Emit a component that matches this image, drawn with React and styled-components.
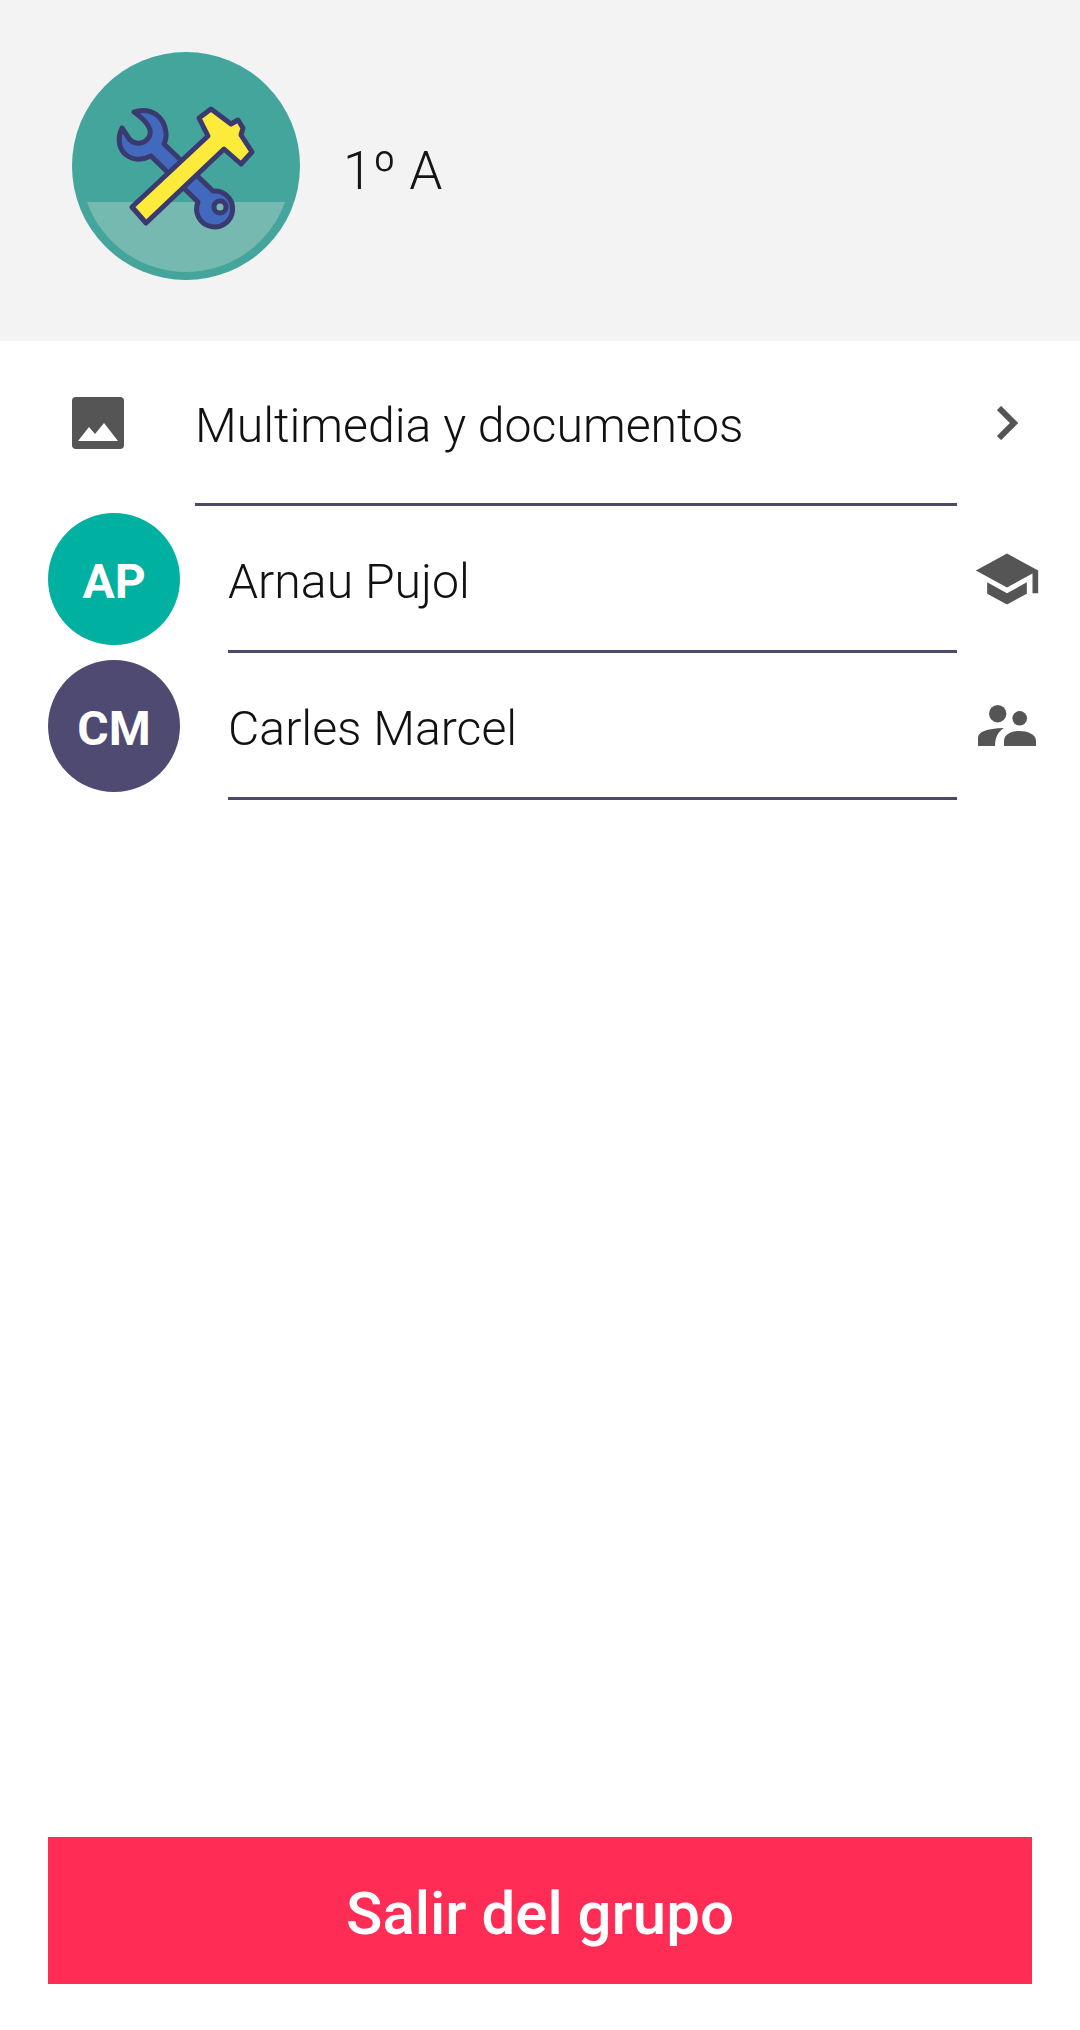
import React from "react";
import styled, { createGlobalStyle } from "styled-components";

const GlobalStyle = createGlobalStyle`
  html, body {
    margin: 0;
    padding: 0;
    background: #fff;
    font-family: Roboto, "Liberation Sans", sans-serif;
  }
`;

const Page = styled.div`
  width: 1080px;
  height: 2030px;
  display: flex;
  flex-direction: column;
  background: #fff;
`;

const Header = styled.header`
  height: 341px;
  box-sizing: border-box;
  padding: 0 0 9px 72px;
  display: flex;
  align-items: center;
  background: #f3f3f3;
`;

const GroupLogo = styled.svg`
  width: 228px;
  height: 228px;
  flex-shrink: 0;
`;

const GroupName = styled.h1`
  margin: 10px 0 0 43px;
  font-size: 53px;
  font-weight: 300;
  color: #151515;
`;

const Row = styled.div`
  display: flex;
  align-items: center;
  padding: 0 23px 0 ${props => props.$left}px;
`;

const MediaIcon = styled.svg`
  width: 52px;
  height: 52px;
  flex-shrink: 0;
  margin-right: 71px;
  margin-top: -1px;
`;

const Avatar = styled.div`
  width: 132px;
  height: 132px;
  box-sizing: border-box;
  padding-top: 4px;
  flex-shrink: 0;
  margin-right: 48px;
  margin-top: -1px;
  border-radius: 50%;
  background: ${props => props.$color};
  color: #fff;
  font-size: 48px;
  font-weight: 700;
  display: flex;
  align-items: center;
  justify-content: center;
`;

const RowBody = styled.div`
  flex: 1;
  height: ${props => props.$height}px;
  display: flex;
  align-items: center;
  box-sizing: border-box;
  padding-top: 6px;
  border-bottom: 3px solid #4b4a68;
  font-size: 48.2px;
  font-weight: 300;
  color: #111;
`;

const RowIcon = styled.div`
  width: 100px;
  flex-shrink: 0;
  margin-top: -1px;
  display: flex;
  justify-content: center;
  color: #555;
`;

const LeaveButton = styled.button`
  margin: auto 48px 46px;
  height: 147px;
  border: 0;
  padding: 6px 0 0;
  background: #ff2d55;
  color: #fff;
  font-family: inherit;
  font-size: 60px;
  font-weight: 500;
`;

const Logo = () => (
  <GroupLogo viewBox="0 0 228 228">
    <circle cx="114" cy="114" r="114" fill="#43a59b" />
    <path d="M15 150H213A105 105 0 0 1 15 150Z" fill="#75b9b1" />
    <g stroke="#3a3a70" strokeWidth="5" strokeLinejoin="round" fill="#4169be">
      <path d="M62 60C70 57 80 58 87 65C94 72 96 84 92 92L141 139A18 18 0 1 1 126 150L79 104C69 109 59 108 52 101C46 94 46 84 50 76L58 88C64 93 73 92 77 85C81 78 76 70 62 60Z" />
      <circle cx="148" cy="155" r="6" fill="#75b9b1" />
    </g>
    <path
      d="M139 57L159 72L166 68L171 76L169 83L180 100L169 112L152 97L74 171L60 155L136 84L127 66Z"
      fill="#fdeb3b"
      stroke="#3a3a70"
      strokeWidth="5"
      strokeLinejoin="round"
    />
  </GroupLogo>
);

const ImageIcon = () => (
  <MediaIcon viewBox="0 0 52 52">
    <rect width="52" height="52" rx="4" fill="#555" />
    <path d="M6 44L17 30L23 37L32 26L46 44Z" fill="#fff" />
  </MediaIcon>
);

const Chevron = () => (
  <svg width="22" height="34" viewBox="0 0 22 34">
    <path d="M3 2L18 17L3 32" fill="none" stroke="currentColor" strokeWidth="6" />
  </svg>
);

const TeacherIcon = () => (
  <svg width="68" height="68" viewBox="0 0 24 24">
    <path
      fill="currentColor"
      d="M5 13.18v4L12 21l7-3.82v-4L12 17l-7-3.82zM12 3L1 9l11 6 9-4.91V17h2V9L12 3z"
    />
  </svg>
);

const PeopleIcon = () => (
  <svg width="58" height="42" viewBox="0 0 58 42">
    <g fill="currentColor">
      <circle cx="19.7" cy="8.7" r="8.7" />
      <circle cx="41.7" cy="13.3" r="7.3" />
      <path d="M0 41V33C0 27 8 23.5 26 23C20 27 17 32 17 41Z" />
      <path d="M26 41V36C26 29 34 26 41.5 26C49 26 58 29 58 36V41Z" />
    </g>
  </svg>
);

const members = [
  { initials: "AP", name: "Arnau Pujol", color: "#00b0a0", icon: <TeacherIcon /> },
  { initials: "CM", name: "Carles Marcel", color: "#4f4a72", icon: <PeopleIcon /> }
];

export default function App() {
  return (
    <Page>
      <GlobalStyle />
      <Header>
        <Logo />
        <GroupName>1º A</GroupName>
      </Header>
      <Row $left={72}>
        <ImageIcon />
        <RowBody $height={165}>Multimedia y documentos</RowBody>
        <RowIcon>
          <Chevron />
        </RowIcon>
      </Row>
      {members.map(member => (
        <Row $left={48} key={member.initials}>
          <Avatar $color={member.color}>{member.initials}</Avatar>
          <RowBody $height={147}>{member.name}</RowBody>
          <RowIcon>{member.icon}</RowIcon>
        </Row>
      ))}
      <LeaveButton>Salir del grupo</LeaveButton>
    </Page>
  );
}
